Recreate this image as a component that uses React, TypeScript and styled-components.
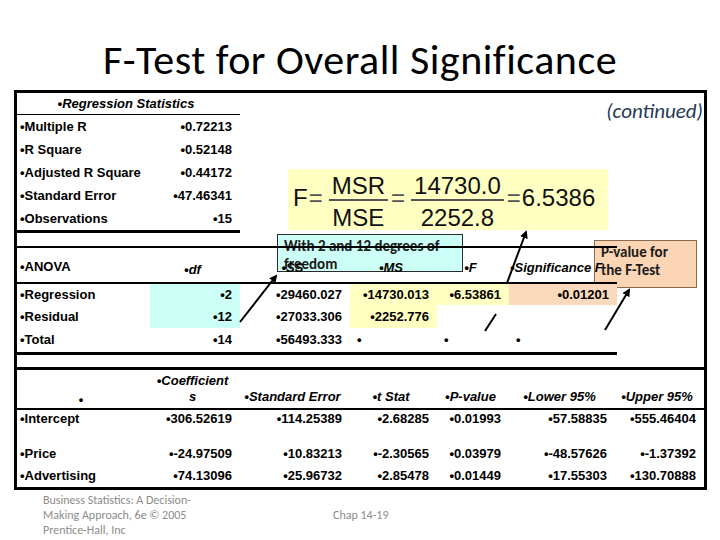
import React from "react";
import styled, { createGlobalStyle } from "styled-components";

const Global = createGlobalStyle`
  html, body { margin: 0; padding: 0; background: #fff; }
  body { width: 720px; height: 540px; overflow: hidden; }
`;

const Page = styled.div`
  position: relative;
  width: 720px;
  height: 540px;
  background: #fff;
  font-family: "Liberation Sans", Arial, sans-serif;
  color: #000;
`;

const Title = styled.h1`
  margin: 0;
  height: 90px;
  box-sizing: border-box;
  padding-top: 35px;
  font-family: "Carlito", "Lato", sans-serif;
  font-weight: 400;
  font-size: 42px;
  letter-spacing: 0.5px;
  line-height: 50px;
  text-align: center;
  white-space: nowrap;
`;

const Frame = styled.div`
  margin-left: 14px;
  width: 693px;
  height: 400px;
  box-sizing: border-box;
  border: 3px solid #000;
  display: flex;
  flex-direction: column;
`;

const TopSection = styled.div`
  display: flex;
  height: 140px;
`;

const StatsTable = styled.div`
  width: 223px;
  border-bottom: 3px solid #000;
  position: relative;
  z-index: 1;
`;

const RightArea = styled.div`
  flex: 1;
  display: flex;
  flex-direction: column;
`;

const Continued = styled.div`
  padding: 6px 1px 0 0;
  text-align: right;
  font-family: "Carlito", "Lato", sans-serif;
  font-style: italic;
  font-size: 21px;
  line-height: 25px;
  color: #26395a;
`;

const FormulaBox = styled.div`
  margin: auto 0 3px 48px;
  width: 320px;
  height: 61px;
  box-sizing: border-box;
  padding: 4px 0 0 5px;
  background: #ffffc2;
  display: flex;
  align-items: flex-start;
  font-family: "Liberation Sans", Arial, sans-serif;
  font-size: 24px;
  color: #111;
`;

const Sym = styled.span<{ $gap?: number; $thin?: boolean }>`
  margin-top: 12px;
  margin-right: ${(p) => p.$gap ?? 0}px;
  line-height: 26px;
  color: ${(p) => (p.$thin ? "#555" : "inherit")};
`;

const Frac = styled.span`
  display: inline-flex;
  flex-direction: column;
  align-items: center;
  margin-right: 3px;
`;

const Num = styled.span`
  padding: 0 3px;
  line-height: 26px;
`;

const Bar = styled.span`
  align-self: stretch;
  height: 1.5px;
  background: #555;
`;

const Den = styled.span`
  padding: 4px 3px 0;
  line-height: 26px;
`;

const Grid = styled.div<{ $cols: string; $h: number; $line?: number }>`
  display: grid;
  grid-template-columns: ${(p) => p.$cols};
  height: ${(p) => p.$h}px;
  box-sizing: border-box;
  border-bottom: ${(p) => (p.$line ? `${p.$line}px solid #000` : "none")};
`;

const Cell = styled.div<{
  $align?: "left" | "right" | "center";
  $v?: "center" | "flex-end" | "flex-start";
  $bg?: string;
  $italic?: boolean;
  $pt?: number;
  $pb?: number;
  $pl?: number;
  $span?: number;
}>`
  display: flex;
  align-items: ${(p) => p.$v ?? "center"};
  justify-content: ${(p) =>
    p.$align === "right" ? "flex-end" : p.$align === "center" ? "center" : "flex-start"};
  grid-column: span ${(p) => p.$span ?? 1};
  padding: ${(p) => p.$pt ?? 0}px 8px ${(p) => p.$pb ?? 0}px ${(p) => p.$pl ?? 3}px;
  background: ${(p) => p.$bg ?? "transparent"};
  font-size: 13px;
  font-weight: 700;
  font-style: ${(p) => (p.$italic ? "italic" : "normal")};
  line-height: 16px;
  white-space: nowrap;
  text-align: center;
`;

const AnovaTable = styled.div`
  width: 600px;
  margin-top: 13px;
  border-top: 2px solid #000;
  border-bottom: 3px solid #000;
  position: relative;
  z-index: 1;
`;

const CoefTable = styled.div`
  margin-top: 12px;
  border-top: 3px solid #000;
  position: relative;
  z-index: 1;
`;

const Callout = styled.div<{ $x: number; $y: number; $w: number; $h: number; $bg: string; $border: string }>`
  position: absolute;
  left: ${(p) => p.$x}px;
  top: ${(p) => p.$y}px;
  width: ${(p) => p.$w}px;
  height: ${(p) => p.$h}px;
  box-sizing: border-box;
  background: ${(p) => p.$bg};
  border: 1px solid ${(p) => p.$border};
  padding: 2px 2px 0 6px;
  font-family: "Carlito", "Lato", sans-serif;
  font-weight: 700;
  font-size: 15px;
  line-height: 18px;
  color: #1c1c1c;
  white-space: nowrap;
  z-index: 0;
`;

const Arrows = styled.svg`
  position: absolute;
  left: 0;
  top: 0;
  pointer-events: none;
  z-index: 2;
`;

const Footer = styled.div`
  display: flex;
  padding-top: 3px;
  font-family: "Carlito", "Lato", sans-serif;
  color: #8c8c8c;
  font-size: 12px;
  line-height: 15px;
`;

const Credit = styled.div`
  margin-left: 43px;
  width: 290px;
`;

const Chap = styled.div`
  padding-top: 15px;
`;

const CYAN = "#ccfff5";
const YELLOW = "#ffffc2";
const PEACH = "#fbd9bc";

const ANOVA_COLS = "133px 90px 110px 87px 72px 108px";
const COEF_COLS = "133px 90px 110px 87px 72px 106px 89px";

const b = (s: string) => (s ? `•${s}` : "");

const stats: [string, string][] = [
  ["Multiple R", "0.72213"],
  ["R Square", "0.52148"],
  ["Adjusted R Square", "0.44172"],
  ["Standard Error", "47.46341"],
  ["Observations", "15"],
];

type AnovaRow = { label: string; vals: string[]; bgs: (string | undefined)[]; h: number; dots?: boolean };

const anova: AnovaRow[] = [
  {
    label: "Regression",
    vals: ["2", "29460.027", "14730.013", "6.53861", "0.01201"],
    bgs: [CYAN, undefined, YELLOW, YELLOW, PEACH],
    h: 21,
  },
  {
    label: "Residual",
    vals: ["12", "27033.306", "2252.776", "", ""],
    bgs: [CYAN, undefined, YELLOW, undefined, undefined],
    h: 23,
  },
  {
    label: "Total",
    vals: ["14", "56493.333", "", "", ""],
    bgs: [undefined, undefined, undefined, undefined, undefined],
    h: 24,
    dots: true,
  },
];

const coefHeads = ["Standard Error", "t Stat", "P-value", "Lower 95%", "Upper 95%"];

const coefs: { label: string; vals: string[]; h: number; top?: boolean }[] = [
  { label: "Intercept", vals: ["306.52619", "114.25389", "2.68285", "0.01993", "57.58835", "555.46404"], h: 32, top: true },
  { label: "Price", vals: ["-24.97509", "10.83213", "-2.30565", "0.03979", "-48.57626", "-1.37392"], h: 23 },
  { label: "Advertising", vals: ["74.13096", "25.96732", "2.85478", "0.01449", "17.55303", "130.70888"], h: 22 },
];

export default function App() {
  return (
    <Page>
      <Global />
      <Title>F-Test for Overall Significance</Title>

      <Callout $x={277} $y={234} $w={186} $h={38} $bg={CYAN} $border="#2a2a2a">
        With 2 and 12 degrees of
        <br />
        freedom
      </Callout>
      <Callout $x={594} $y={240} $w={103} $h={48} $bg="#fbd5b4" $border="#8a6a50">
        P-value for
        <br />
        the F-Test
      </Callout>

      <Frame>
        <TopSection>
          <StatsTable>
            <Grid $cols="133px 90px" $h={22} $line={1}>
              <Cell $span={2} $align="center" $italic>
                •Regression Statistics
              </Cell>
            </Grid>
            {stats.map(([l, v]) => (
              <Grid key={l} $cols="133px 90px" $h={23}>
                <Cell>{b(l)}</Cell>
                <Cell $align="right">{b(v)}</Cell>
              </Grid>
            ))}
          </StatsTable>
          <RightArea>
            <Continued>(continued)</Continued>
            <FormulaBox>
              <Sym $gap={1}>F</Sym>
              <Sym $gap={6} $thin>=</Sym>
              <Frac>
                <Num>MSR</Num>
                <Bar />
                <Den>MSE</Den>
              </Frac>
              <Sym $gap={6} $thin>=</Sym>
              <Frac>
                <Num>14730.0</Num>
                <Bar />
                <Den>2252.8</Den>
              </Frac>
              <Sym $gap={1} $thin>=</Sym>
              <Sym>6.5386</Sym>
            </FormulaBox>
          </RightArea>
        </TopSection>

        <AnovaTable>
          <Grid $cols={ANOVA_COLS} $h={36} $line={2}>
            <Cell $v="flex-end" $pb={7}>•ANOVA</Cell>
            <Cell $v="flex-end" $pb={4} $align="center" $italic>•df</Cell>
            <Cell $v="flex-end" $pb={6} $align="center" $italic>•SS</Cell>
            <Cell $v="flex-end" $pb={6} $align="center" $italic>•MS</Cell>
            <Cell $v="flex-end" $pb={6} $align="center" $italic>•F</Cell>
            <Cell $v="flex-end" $pb={6} $pl={1} $italic>•Significance F</Cell>
          </Grid>
          {anova.map((r) => (
            <Grid key={r.label} $cols={ANOVA_COLS} $h={r.h}>
              <Cell>{b(r.label)}</Cell>
              {r.vals.map((v, i) =>
                r.dots && i >= 2 ? (
                  <Cell key={i} $pl={7}>•</Cell>
                ) : (
                  <Cell key={i} $align="right" $bg={r.bgs[i]}>
                    {b(v)}
                  </Cell>
                )
              )}
            </Grid>
          ))}
        </AnovaTable>

        <CoefTable>
          <Grid $cols={COEF_COLS} $h={40} $line={2}>
            <Cell $v="flex-end" $pb={0} $align="center">•</Cell>
            <Cell $v="flex-end" $pb={3} $align="center" $italic>
              <span>
                •Coefficient
                <br />s
              </span>
            </Cell>
            {coefHeads.map((h) => (
              <Cell key={h} $v="flex-end" $pb={3} $align="center" $italic>
                {b(h)}
              </Cell>
            ))}
          </Grid>
          {coefs.map((r) => (
            <Grid key={r.label} $cols={COEF_COLS} $h={r.h}>
              <Cell $v={r.top ? "flex-start" : "center"} $pt={r.top ? 1 : 0}>
                {b(r.label)}
              </Cell>
              {r.vals.map((v, i) => (
                <Cell key={i} $align="right" $v={r.top ? "flex-start" : "center"} $pt={r.top ? 1 : 0}>
                  {b(v)}
                </Cell>
              ))}
            </Grid>
          ))}
        </CoefTable>
      </Frame>

      <Footer>
        <Credit>
          Business Statistics: A Decision-
          <br />
          Making Approach, 6e © 2005
          <br />
          Prentice-Hall, Inc
        </Credit>
        <Chap>Chap 14-19</Chap>
      </Footer>

      <Arrows width={720} height={540} viewBox="0 0 720 540">
        <defs>
          <marker id="ah" markerWidth="8" markerHeight="8" refX="6" refY="4" orient="auto" markerUnits="userSpaceOnUse">
            <path d="M0,0 L8,4 L0,8 Z" fill="#000" />
          </marker>
        </defs>
        <line x1={240} y1={322} x2={276} y2={276} stroke="#000" strokeWidth={2} markerEnd="url(#ah)" />
        <line x1={485} y1={331} x2={496} y2={314} stroke="#000" strokeWidth={2} />
        <line x1={507} y1={283} x2={526} y2={232} stroke="#000" strokeWidth={2} markerEnd="url(#ah)" />
        <line x1={605} y1={330} x2={629} y2={290} stroke="#000" strokeWidth={2} markerEnd="url(#ah)" />
      </Arrows>
    </Page>
  );
}
